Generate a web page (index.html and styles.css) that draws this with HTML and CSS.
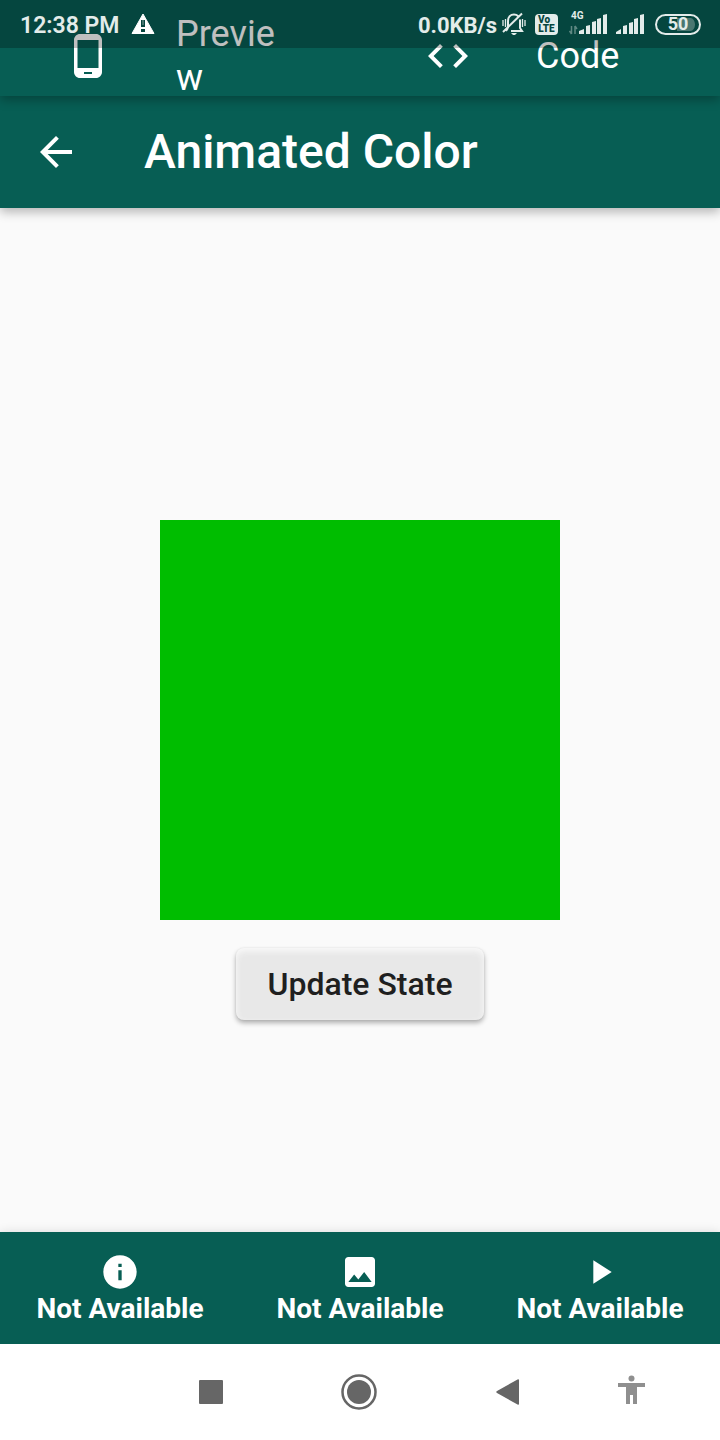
FILE: index.html
```html
<!DOCTYPE html>
<html lang="en">
<head>
<meta charset="utf-8">
<meta name="viewport" content="width=device-width, initial-scale=1">
<title>Animated Color</title>
<link rel="stylesheet" href="styles.css">
</head>
<body>
<div class="screen">
  <div class="status">
    <span class="status-text">12:38 PM</span>
    <svg class="warn" width="24" height="22" viewBox="0 0 24 22" aria-hidden="true"><path fill="#fff" stroke="#fff" stroke-linejoin="round" d="M12 1 23 20.500H1z"/><path class="cut" d="M10 7h4v7h-4zM10 16h4v3h-4z"/><path fill="#fff" d="M11.500 7h1v5h-1z" opacity=".5"/></svg>
    <div class="status-right">
      <span class="status-text speed">0.0KB/s</span>
      <svg width="24" height="24" viewBox="0 0 24 24" fill="none" stroke="#e3ecea" stroke-width="2" aria-hidden="true"><path d="M6 16V9c0-4 2.500-6.500 6-6.500 1.500 0 3 .5 4 1.500M18 7.500V16l2 3H9M4 19l2-3M1 20 20 1.500"/><path d="M1 8v6M3.500 7v8M20.500 7v8M23 8v6" stroke-width="1.300"/><path d="M9 21h6l-2 2h-2z" fill="#e3ecea" stroke="none"/></svg>
      <span class="volte"><span>Vo</span><span>LTE</span></span>
      <div class="mobile">
        <svg width="38" height="22" viewBox="0 0 38 22" aria-hidden="true"><path fill="none" stroke="#5f8983" stroke-width="1.500" d="M2.500 13v8M.5 18l2 3M6 21v-8M8 16l-2-3"/><path fill="#e3ecea" d="M10 18l5-2v5h-5zM17 13l4-1v9h-4zM23 9l4-1v13h-4zM28 6l4-1v16h-4zM34 2l4-1v20h-4z"/></svg>
        <span class="net">4G</span>
      </div>
      <svg class="bars" width="28" height="22" viewBox="0 0 28 22" aria-hidden="true"><path fill="#e3ecea" d="M0 19l5-3v5H0zM7 13l4-1v9H7zM13 10l4-1v12h-4zM18 6l4-1v16h-4zM24 2l4-1v20h-4z"/></svg>
      <span class="battery">50</span>
    </div>
  </div>

  <nav class="tabs" aria-label="View">
    <a class="tab" href="#preview">
      <svg class="icon" viewBox="0 0 24 24" aria-hidden="true"><path d="M16 1H8C6.340 1 5 2.340 5 4v16c0 1.660 1.340 3 3 3h8c1.660 0 3-1.340 3-3V4c0-1.660-1.340-3-3-3zm-2 20h-4v-1h4v1zm3.250-3H6.750V4h10.500v14z"/></svg>
      <span class="tab-label">Preview</span>
    </a>
    <a class="tab" href="#code">
      <svg class="icon" viewBox="0 0 24 24" aria-hidden="true"><path d="M9.400 16.600 4.800 12l4.600-4.600L8 6l-6 6 6 6 1.400-1.400zm5.200 0 4.600-4.600-4.600-4.600L16 6l6 6-6 6-1.400-1.400z"/></svg>
      <span class="tab-label">Code</span>
    </a>
  </nav>

  <header class="appbar">
    <button class="back" type="button" aria-label="Back"><svg class="icon" viewBox="0 0 24 24" aria-hidden="true"><path d="M20 11H7.830l5.590-5.590L12 4l-8 8 8 8 1.410-1.410L7.830 13H20v-2z"/></svg></button>
    <h1 class="title">Animated Color</h1>
  </header>

  <main class="content" id="preview">
    <div class="swatch"></div>
    <button class="update" type="button">Update State</button>
  </main>

  <footer class="actions">
    <button class="action" type="button">
      <svg class="action-icon" viewBox="0 0 24 24" aria-hidden="true"><path d="M12 2C6.480 2 2 6.480 2 12s4.480 10 10 10 10-4.480 10-10S17.520 2 12 2zm1 15h-2v-6h2v6zm0-8h-2V7h2v2z"/></svg>
      <span>Not Available</span>
    </button>
    <button class="action" type="button">
      <svg class="action-icon" viewBox="0 0 24 24" aria-hidden="true"><path d="M21 19V5c0-1.100-.9-2-2-2H5c-1.100 0-2 .9-2 2v14c0 1.100.9 2 2 2h14c1.100 0 2-.9 2-2zM8.500 13.500l2.500 3.010L14.500 12l4.500 6H5l3.500-4.500z"/></svg>
      <span>Not Available</span>
    </button>
    <button class="action" type="button">
      <svg class="action-icon" viewBox="0 0 24 24" aria-hidden="true"><path d="M8 5v14l11-7z"/></svg>
      <span>Not Available</span>
    </button>
  </footer>

  <nav class="system" aria-label="System">
    <button type="button" aria-label="Recent apps"><svg width="24" height="24" viewBox="0 0 24 24"><rect width="24" height="24" rx="1" fill="#666"/></svg></button>
    <button type="button" aria-label="Home"><svg width="36" height="36" viewBox="0 0 36 36"><circle cx="18" cy="18" r="16.500" fill="none" stroke="#666" stroke-width="2.500"/><circle cx="18" cy="18" r="12" fill="#666"/></svg></button>
    <button type="button" aria-label="System back"><svg width="24" height="26" viewBox="0 0 24 26"><path fill="#666" d="M22 .3 1 12q-1.500 1 0 2l21 11.700q1 .3 1-1V1.300q0-1.300-1-1z"/></svg></button>
    <button class="access" type="button" aria-label="Accessibility"><svg width="28" height="30" viewBox="0 0 28 30"><path fill="#8f8f8f" d="M0 8h27v4h-8v17h-4v-9h-3v9H8V12H0z"/><circle cx="13.500" cy="3.500" r="3" fill="#8f8f8f"/></svg></button>
  </nav>
</div>
</body>
</html>
```
FILE: styles.css
```css
* { box-sizing: border-box; }
body { margin: 0; font-family: Roboto, "Liberation Sans", sans-serif; background: #fafafa; }
button { border: 0; padding: 0; background: none; color: inherit; font: inherit; }
svg { display: block; flex: none; }

.screen { position: relative; display: flex; flex-direction: column; min-height: 100vh; }

.status {
  position: absolute; top: 0; left: 0; right: 0; z-index: 5;
  display: flex; align-items: center; gap: 12px;
  height: 48px; padding: 0 19px 0 20px;
  background: rgba(0, 0, 0, .25); color: #e3ecea;
}
.status-text { font-size: 23px; line-height: 28px; font-weight: 600; padding-top: 4px; }
.cut { fill: #07463f; }
.status-right { display: flex; align-items: center; gap: 9px; margin-left: auto; }
.speed { margin-right: -4px; font-size: 22px; font-weight: 700; }
.volte {
  display: flex; flex-direction: column; align-items: center; justify-content: center;
  width: 23px; height: 21px; border-radius: 4px; background: #e3ecea;
  color: #07463f; font-size: 10px; line-height: 9px; font-weight: 900;
}
.volte span:first-child { align-self: flex-start; padding-left: 3px; }
.mobile { position: relative; margin-left: 2px; }
.net { position: absolute; left: 2px; top: -3px; font-size: 10px; line-height: 12px; font-weight: 700; }
.battery {
  width: 46px; height: 21px; border: 2px solid #e3ecea; border-radius: 11px;
  background: linear-gradient(to right, transparent 48%, #4a7771 48%) content-box;
  padding: 2px 4px; margin-left: 2px;
  font-size: 18px; line-height: 12px; font-weight: 700; text-align: center;
}

.tabs {
  position: relative; z-index: 2; display: grid; grid-template: 80px / 1fr 1fr;
  height: 96px; padding-top: 16px; background: #075e54;
  box-shadow: 0 4px 10px rgba(0, 0, 0, .28);
}
.tab { display: flex; align-items: center; gap: 64px; padding: 0 64px; color: #fff; text-decoration: none; }
.icon { display: block; width: 48px; height: 48px; fill: #fff; }
.tab-label { min-width: 0; font-size: 36px; line-height: 44px; overflow-wrap: anywhere; }

.appbar {
  position: relative; z-index: 1; display: flex; align-items: center; gap: 64px;
  height: 112px; padding: 0 32px; background: #075e54; color: #fff;
  box-shadow: 0 4px 10px rgba(0, 0, 0, .28);
}
.title { margin: 0; font-size: 48px; line-height: 56px; font-weight: 500; }

.content {
  flex: 1; display: flex; flex-direction: column; align-items: center; justify-content: center;
  gap: 28px; padding-top: 100px;
}
.swatch { width: 400px; height: 400px; background: #00bd00; }
.update {
  padding: 16px 31px; border-radius: 8px; background: #e8e8e8; color: #1f1f1f;
  font-size: 32px; line-height: 40px; font-weight: 500;
  box-shadow: inset 0 3px 6px #fafafa, 0 3px 5px rgba(0, 0, 0, .3), 0 0 2px rgba(0, 0, 0, .08);
}

.actions {
  display: grid; grid-template-columns: repeat(3, 1fr); padding: 20px 0 18px;
  background: #075e54; color: #fff; box-shadow: 0 0 10px rgba(0, 0, 0, .12);
}
.action {
  display: flex; flex-direction: column; align-items: center;
  font-size: 28px; line-height: 34px; font-weight: 700;
}
.action-icon { width: 40px; height: 40px; fill: #fff; }

.system {
  display: grid; grid-template-columns: 37fr 37fr 37fr 25fr; height: 96px;
  padding: 0 38px 0 137px; background: #fff;
}
.system button { display: flex; align-items: center; justify-content: center; }
.system .access { padding-bottom: 4px; }
```
